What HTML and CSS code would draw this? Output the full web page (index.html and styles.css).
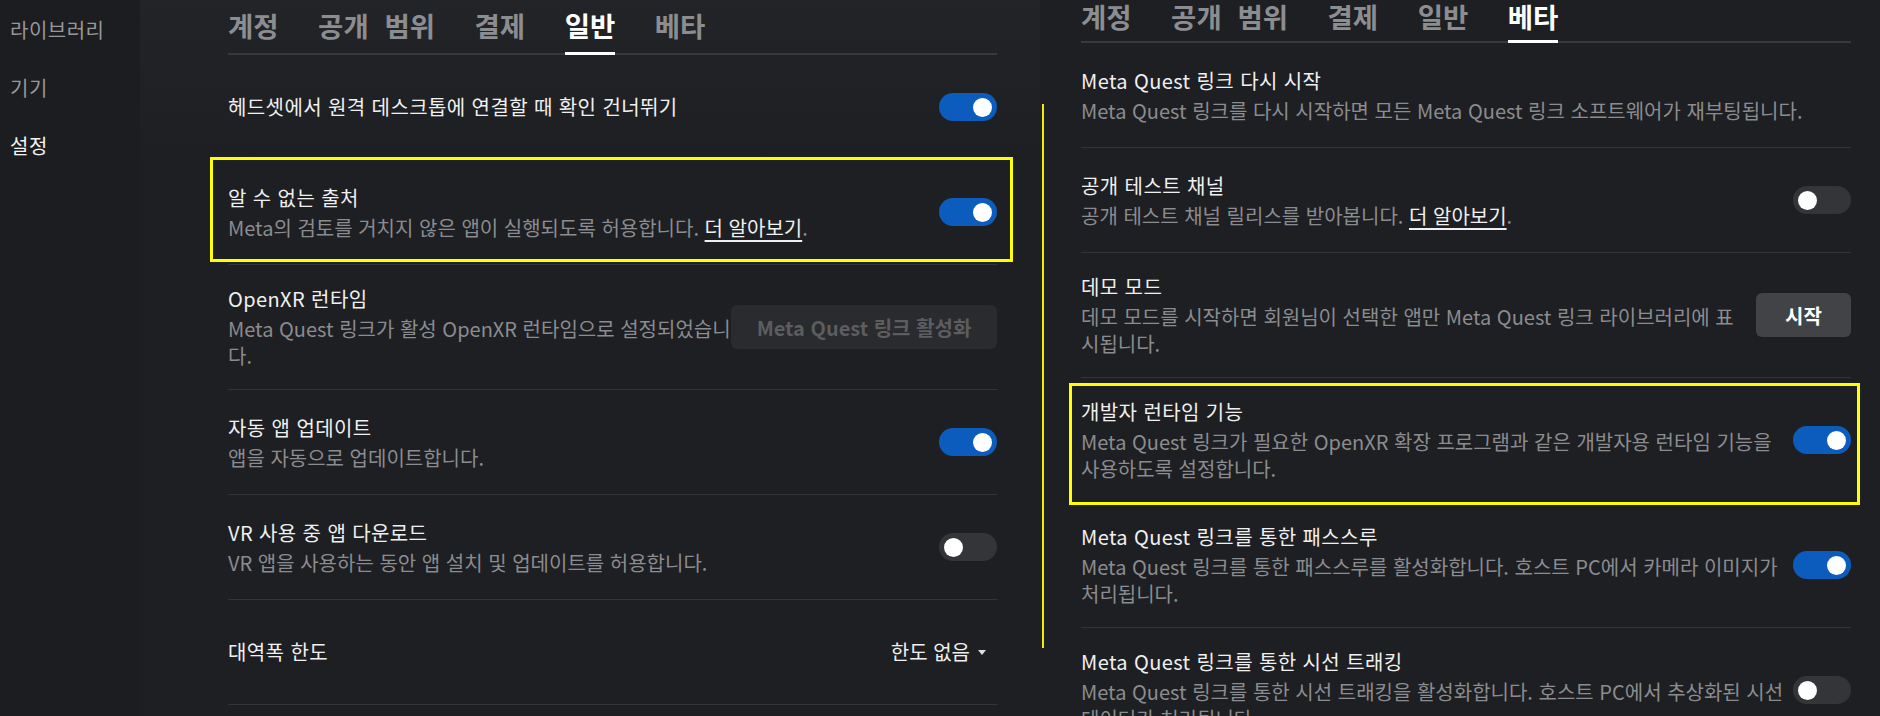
FILE: index.html
```html
<!DOCTYPE html>
<html lang="ko">
<head>
<meta charset="utf-8">
<title>설정</title>
<link rel="stylesheet" href="styles.css">
</head>
<body>
<div class="page">
  <nav class="sidebar">
    <div class="nav-item">라이브러리</div>
    <div class="nav-item">기기</div>
    <div class="nav-item active">설정</div>
  </nav>

  <section class="panel panel-left">
    <div class="tabs">
      <div class="tab">계정</div>
      <div class="tab">공개 범위</div>
      <div class="tab">결제</div>
      <div class="tab active">일반</div>
      <div class="tab">베타</div>
    </div>

    <div class="row">
      <div class="text"><div class="title">헤드셋에서 원격 데스크톱에 연결할 때 확인 건너뛰기</div></div>
      <div class="toggle on"><span class="knob"></span></div>
    </div>

    <div class="row highlight hl-left">
      <div class="text">
        <div class="title">알 수 없는 출처</div>
        <div class="desc">Meta의 검토를 거치지 않은 앱이 실행되도록 허용합니다. <span class="link">더 알아보기</span>.</div>
      </div>
      <div class="toggle on"><span class="knob"></span></div>
    </div>

    <div class="row">
      <div class="text">
        <div class="title">OpenXR 런타임</div>
        <div class="desc">Meta Quest 링크가 활성 OpenXR 런타임으로 설정되었습니<br>다.</div>
      </div>
      <div class="btn btn-disabled">Meta Quest 링크 활성화</div>
    </div>

    <div class="row">
      <div class="text">
        <div class="title">자동 앱 업데이트</div>
        <div class="desc">앱을 자동으로 업데이트합니다.</div>
      </div>
      <div class="toggle on"><span class="knob"></span></div>
    </div>

    <div class="row">
      <div class="text">
        <div class="title">VR 사용 중 앱 다운로드</div>
        <div class="desc">VR 앱을 사용하는 동안 앱 설치 및 업데이트를 허용합니다.</div>
      </div>
      <div class="toggle"><span class="knob"></span></div>
    </div>

    <div class="row">
      <div class="text"><div class="title">대역폭 한도</div></div>
      <div class="select">한도 없음 <span class="caret"></span></div>
    </div>
  </section>

  <section class="panel panel-right">
    <div class="marker-line"></div>
    <div class="tabs">
      <div class="tab">계정</div>
      <div class="tab">공개 범위</div>
      <div class="tab">결제</div>
      <div class="tab">일반</div>
      <div class="tab active">베타</div>
    </div>

    <div class="row">
      <div class="text">
        <div class="title">Meta Quest 링크 다시 시작</div>
        <div class="desc">Meta Quest 링크를 다시 시작하면 모든 Meta Quest 링크 소프트웨어가 재부팅됩니다.</div>
      </div>
    </div>

    <div class="row">
      <div class="text">
        <div class="title">공개 테스트 채널</div>
        <div class="desc">공개 테스트 채널 릴리스를 받아봅니다. <span class="link">더 알아보기</span>.</div>
      </div>
      <div class="toggle"><span class="knob"></span></div>
    </div>

    <div class="row">
      <div class="text">
        <div class="title">데모 모드</div>
        <div class="desc">데모 모드를 시작하면 회원님이 선택한 앱만 Meta Quest 링크 라이브러리에 표<br>시됩니다.</div>
      </div>
      <div class="btn btn-start">시작</div>
    </div>

    <div class="row highlight hl-right">
      <div class="text">
        <div class="title">개발자 런타임 기능</div>
        <div class="desc">Meta Quest 링크가 필요한 OpenXR 확장 프로그램과 같은 개발자용 런타임 기능을<br>사용하도록 설정합니다.</div>
      </div>
      <div class="toggle on"><span class="knob"></span></div>
    </div>

    <div class="row">
      <div class="text">
        <div class="title">Meta Quest 링크를 통한 패스스루</div>
        <div class="desc">Meta Quest 링크를 통한 패스스루를 활성화합니다. 호스트 PC에서 카메라 이미지가<br>처리됩니다.</div>
      </div>
      <div class="toggle on"><span class="knob"></span></div>
    </div>

    <div class="row">
      <div class="text">
        <div class="title">Meta Quest 링크를 통한 시선 트래킹</div>
        <div class="desc">Meta Quest 링크를 통한 시선 트래킹을 활성화합니다. 호스트 PC에서 추상화된 시선<br>데이터가 처리됩니다.</div>
      </div>
      <div class="toggle"><span class="knob"></span></div>
    </div>
  </section>
</div>
</body>
</html>
```

FILE: styles.css
```css
* { box-sizing: border-box; }

html, body {
  margin: 0;
  padding: 0;
  background: #1e1f22;
}

body {
  font-family: "Noto Sans CJK KR", "Noto Sans", sans-serif;
  font-size: 20px;
  color: #ececec;
}

.page {
  display: flex;
  width: 1880px;
  height: 716px;
  overflow: hidden;
}

/* sidebar */
.sidebar {
  width: 140px;
  flex: none;
  background: #1c1d20;
  padding: 16px 0 0 10px;
  display: flex;
  flex-direction: column;
  gap: 30px;
}

.nav-item {
  line-height: 28px;
  letter-spacing: 0.5px;
  color: #979899;
}

.nav-item.active {
  color: #f4f4f4;
}

/* panels */
.panel {
  display: flex;
  flex-direction: column;
}

.panel-left {
  width: 900px;
  flex: none;
  padding: 0 43px 0 88px;
  background: linear-gradient(#232427 0, #1f2023 120px, #1e1f22 160px);
}

.panel-right {
  flex: 1;
  position: relative;
  padding: 0 29px 0 41px;
}

.marker-line {
  position: absolute;
  left: 2px;
  top: 104px;
  width: 2px;
  height: 544px;
  background: #f2ec00;
}

/* tabs */
.tabs {
  display: flex;
  gap: 39.5px;
  border-bottom: 2px solid #38393c;
  flex: none;
}

.panel-left .tabs { padding-top: 7px; }
.panel-right .tabs { padding-top: 2px; }

.tab {
  position: relative;
  font-size: 27.5px;
  font-weight: 700;
  line-height: 36px;
  padding-bottom: 10px;
  word-spacing: 8px;
  color: #8c8d90;
}

.panel-right .tab {
  line-height: 28px;
  padding-bottom: 11px;
}

.tab.active {
  color: #ffffff;
}

.tab.active::after {
  content: "";
  position: absolute;
  left: 0;
  right: 0;
  bottom: -2px;
  height: 3px;
  background: #ffffff;
}

/* rows */
.row {
  position: relative;
  display: flex;
  align-items: center;
  justify-content: space-between;
  gap: 0;
  min-height: 105px;
  padding: 20px 0;
  border-bottom: 1px solid #333438;
  flex: none;
}

.text {
  display: flex;
  flex-direction: column;
  min-width: 0;
}

.title {
  line-height: 28px;
  letter-spacing: 0.4px;
  color: #f0f0f0;
  white-space: nowrap;
}

.desc {
  margin-top: 2px;
  line-height: 27px;
  color: #8b8c8f;
  white-space: nowrap;
}

.link {
  color: #f0f0f0;
  text-decoration: underline;
  text-underline-offset: 4px;
}

/* highlight boxes */
.highlight::after {
  content: "";
  position: absolute;
  border: 3px solid #ffff00;
  pointer-events: none;
}

.hl-left::after {
  left: -18px;
  right: -16px;
  top: -3px;
  bottom: 2px;
}

.hl-right::after {
  left: -12px;
  right: -9px;
  top: 5px;
  bottom: -3px;
}

/* toggle */
.toggle {
  flex: none;
  width: 58px;
  height: 28px;
  border-radius: 14px;
  background: #343538;
  display: flex;
  align-items: center;
  padding: 0 5px;
}

.toggle.on {
  background: #0b5cbd;
  justify-content: flex-end;
}

.knob {
  width: 19px;
  height: 19px;
  border-radius: 50%;
  background: #ffffff;
}

/* buttons */
.btn {
  flex: none;
  height: 44px;
  border-radius: 6px;
  display: flex;
  align-items: center;
  justify-content: center;
  font-weight: 700;
}

.btn-disabled {
  width: 266px;
  background: #2a2b2e;
  color: #5c5d60;
}

.btn-start {
  width: 95px;
  background: #424346;
  color: #ffffff;
}

/* select */
.select {
  display: flex;
  align-items: center;
  gap: 8px;
  padding-right: 11px;
  color: #f0f0f0;
  line-height: 28px;
}

.caret {
  width: 0;
  height: 0;
  border-left: 4px solid transparent;
  border-right: 4px solid transparent;
  border-top: 5px solid #e0e0e0;
}
```
